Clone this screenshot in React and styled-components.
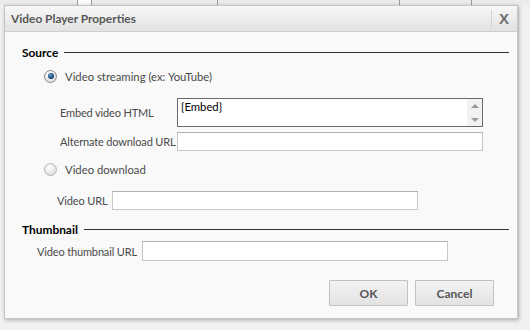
import styled, { createGlobalStyle } from "styled-components";

const GlobalStyle = createGlobalStyle`
  html, body {
    margin: 0;
    padding: 0;
    background: #f1f1f1;
    font-family: Lato, "Liberation Sans", sans-serif;
  }
`;

const Page = styled.div`
  width: 530px;
  height: 330px;
  overflow: hidden;
  display: flex;
  flex-direction: column;
`;

const BackStrip = styled.div`
  height: 5px;
  display: flex;
  background: #ececec;
`;

const BackCell = styled.div`
  width: ${(p) => p.$w}px;
  flex-shrink: 0;
  border-right: 1px solid #9a9a9a;
  background: ${(p) => (p.$light ? "#fbfbfb" : "transparent")};
`;

const Dialog = styled.div`
  margin-left: 4px;
  width: 514px;
  height: 314px;
  box-sizing: border-box;
  border: 1px solid #c4c4c4;
  background: #f9f9f9;
  box-shadow: 1px 1px 4px rgba(0, 0, 0, 0.3);
  display: flex;
  flex-direction: column;
`;

const TitleBar = styled.div`
  height: 26px;
  box-sizing: border-box;
  flex-shrink: 0;
  display: flex;
  align-items: center;
  background: linear-gradient(#f7f7f7, #e2e2e2);
  border-bottom: 1px solid #cfcfcf;
  padding-left: 6px;
`;

const Title = styled.div`
  flex: 1;
  font-size: 11.9px;
  font-weight: 700;
  color: #575757;
`;

const Close = styled.div`
  width: 24px;
  height: 18px;
  border-left: 1px solid #d2d2d2;
  display: flex;
  align-items: center;
  justify-content: center;
  font-family: "Liberation Sans", sans-serif;
  font-weight: 700;
  font-size: 15px;
  color: #6e6e6e;
  margin-right: 1px;
`;

const Body = styled.div`
  flex: 1;
  display: flex;
  flex-direction: column;
  padding: 0 8px 0 17px;
`;

const Section = styled.div`
  display: flex;
  align-items: center;
  gap: 6px;
  height: 14px;
  margin-top: ${(p) => p.$top}px;
  font-size: 11.9px;
  font-weight: 700;
  color: #000;

  &::after {
    content: "";
    flex: 1;
    height: 1px;
    background: #333;
  }
`;

const RadioRow = styled.div`
  display: flex;
  align-items: center;
  gap: 8px;
  height: 16px;
  margin-top: ${(p) => p.$top}px;
  margin-left: 22px;
  font-size: 11.3px;
  color: #4a4a4a;
  white-space: nowrap;
`;

const Radio = styled.span`
  width: 11px;
  height: 11px;
  border-radius: 50%;
  border: 1px solid ${(p) => (p.$checked ? "#8a8a8a" : "#b5b5b5")};
  background: radial-gradient(circle at 40% 35%, #ffffff, #d4d4d4);
  display: flex;
  align-items: center;
  justify-content: center;

  &::after {
    content: "";
    display: ${(p) => (p.$checked ? "block" : "none")};
    width: 6px;
    height: 6px;
    border-radius: 50%;
    background: radial-gradient(circle at 40% 35%, #5aa0d8, #123a66 70%);
  }
`;

const FieldRow = styled.div`
  display: flex;
  align-items: center;
  margin-top: ${(p) => p.$top}px;
  margin-left: ${(p) => p.$indent}px;
`;

const Label = styled.div`
  width: ${(p) => p.$w}px;
  flex-shrink: 0;
  font-size: 11px;
  letter-spacing: -0.15px;
  color: #4a4a4a;
  white-space: nowrap;
`;

const Input = styled.input`
  width: ${(p) => p.$w || 306}px;
  height: ${(p) => p.$h || 19}px;
  box-sizing: border-box;
  border: 1px solid #c6c6c6;
  border-top-color: #b0b0b0;
  background: #fff;
  margin: 0;
  padding: 0 3px;
  outline: none;
`;

const TextArea = styled.div`
  width: 306px;
  height: 29px;
  box-sizing: border-box;
  border: 1px solid #6a6a6a;
  background: #fff;
  display: flex;
`;

const AreaText = styled.div`
  flex: 1;
  padding: 1px 3px;
  font-size: 11.3px;
  color: #000;
`;

const ScrollBar = styled.div`
  width: 15px;
  background: #f2f2f2;
  display: flex;
  flex-direction: column;
  justify-content: space-between;
  align-items: center;
  padding: 5px 0 4px;
  box-sizing: border-box;
`;

const Arrow = styled.span`
  width: 0;
  height: 0;
  border-left: 4px solid transparent;
  border-right: 4px solid transparent;
  ${(p) =>
    p.$down
      ? "border-top: 4px solid #9a9a9a;"
      : "border-bottom: 4px solid #9a9a9a;"}
`;

const Buttons = styled.div`
  display: flex;
  justify-content: flex-end;
  gap: 7px;
  margin-top: 19px;
  padding-right: 15px;
`;

const Button = styled.button`
  width: 79px;
  height: 26px;
  border: 1px solid #c2c2c2;
  border-radius: 1px;
  background: linear-gradient(#f3f3f3, #e3e3e3);
  font-family: Lato, "Liberation Sans", sans-serif;
  font-size: 12px;
  font-weight: 700;
  color: #555;
  padding: 0;
`;

export default function App() {
  return (
    <Page>
      <GlobalStyle />
      <BackStrip>
        <BackCell $w={77} />
        <BackCell $w={13} $light />
        <BackCell $w={125} />
        <BackCell $w={181} />
        <BackCell $w={71} />
      </BackStrip>
      <Dialog>
        <TitleBar>
          <Title>Video Player Properties</Title>
          <Close>X</Close>
        </TitleBar>
        <Body>
          <Section $top={13}>Source</Section>
          <RadioRow $top={9}>
            <Radio $checked />
            Video streaming (ex: YouTube)
          </RadioRow>
          <FieldRow $top={14} $indent={38}>
            <Label $w={117}>Embed video HTML</Label>
            <TextArea>
              <AreaText>{"{Embed}"}</AreaText>
              <ScrollBar>
                <Arrow />
                <Arrow $down />
              </ScrollBar>
            </TextArea>
          </FieldRow>
          <FieldRow $top={5} $indent={38}>
            <Label $w={117}>Alternate download URL</Label>
            <Input readOnly />
          </FieldRow>
          <RadioRow $top={10}>
            <Radio />
            Video download
          </RadioRow>
          <FieldRow $top={14} $indent={35}>
            <Label $w={55}>Video URL</Label>
            <Input readOnly />
          </FieldRow>
          <Section $top={12}>Thumbnail</Section>
          <FieldRow $top={5} $indent={15}>
            <Label $w={105}>Video thumbnail URL</Label>
            <Input readOnly $h={20} />
          </FieldRow>
          <Buttons>
            <Button>OK</Button>
            <Button>Cancel</Button>
          </Buttons>
        </Body>
      </Dialog>
    </Page>
  );
}
